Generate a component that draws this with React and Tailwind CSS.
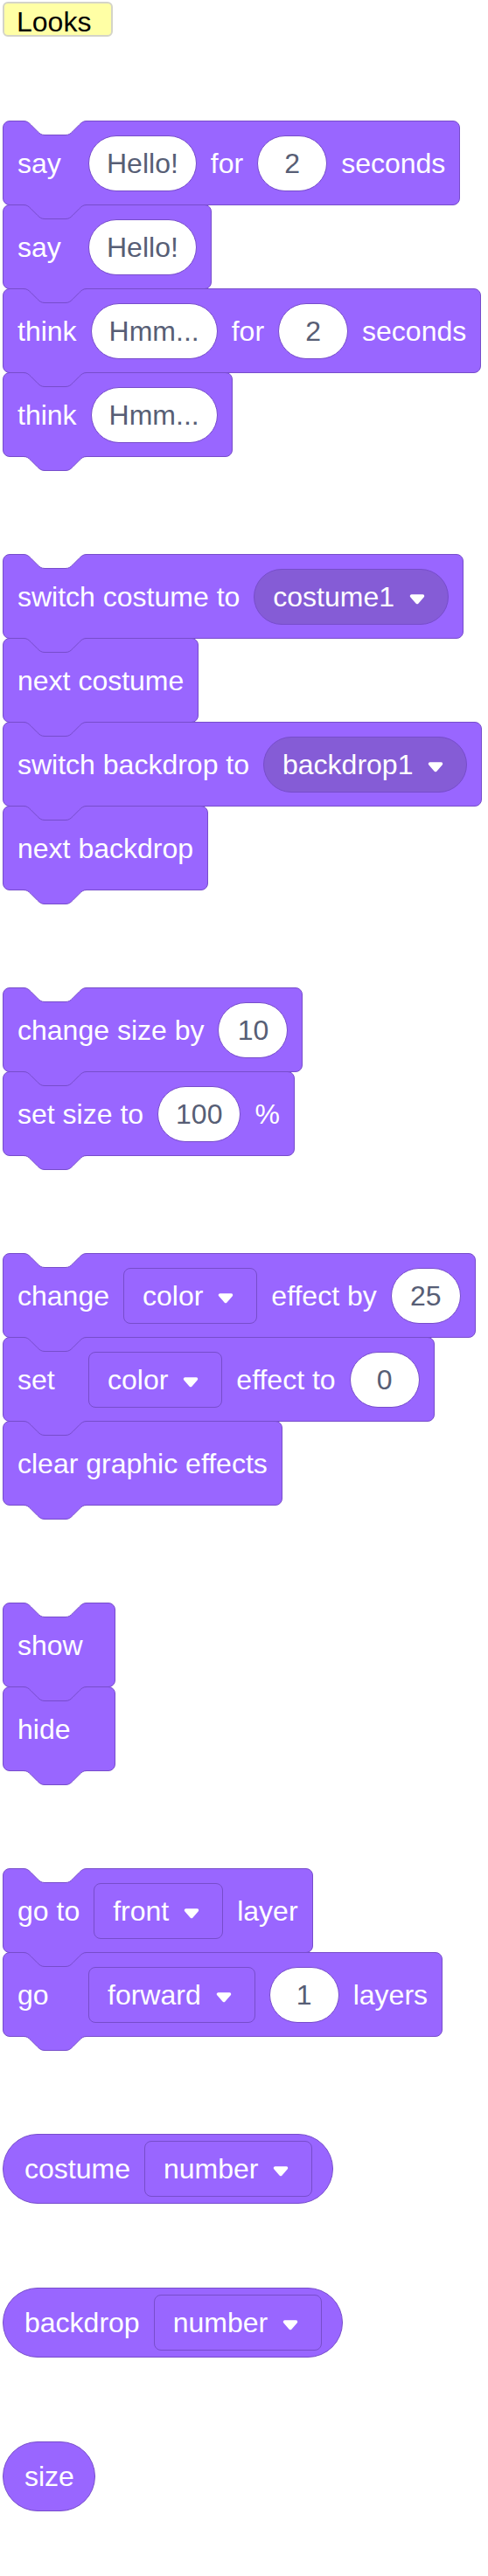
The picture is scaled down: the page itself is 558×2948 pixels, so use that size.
import React from 'react';

const NOTCH = 'M24,0.5 c4,0 6,2 8,4 l8,8 c2,2 4,4 8,4 h24 c4,0 6,-2 8,-4 l8,-8 c2,-2 4,-4 8,-4';

// notch cut at the top of a block, or the tab under the last block of a stack
function Notch({ fill, className }) {
  return (
    <svg
      className={`pointer-events-none absolute -left-px h-[20px] w-[100px] overflow-visible ${className}`}
      viewBox="0 0 100 20"
    >
      <path d={`${NOTCH} V-1.5 H24 Z`} fill={fill} />
      <path d={NOTCH} fill="none" stroke="#774DCB" strokeWidth="1" />
    </svg>
  );
}

function Arrow() {
  return (
    <svg viewBox="0 0 20 14" className="mt-[6px] h-[14px] w-[20px] shrink-0">
      <path
        d="M3.5,3 H16.5 L10,10.5 Z"
        fill="#ffffff"
        stroke="#ffffff"
        strokeWidth="3.5"
        strokeLinejoin="round"
      />
    </svg>
  );
}

function Text({ children, first }) {
  return (
    <span className={`whitespace-nowrap text-[32px] text-white ${first ? 'min-w-[65px]' : ''}`}>
      {children}
    </span>
  );
}

function Input({ children }) {
  return (
    <span className="flex h-16 min-w-[80px] items-center justify-center whitespace-nowrap rounded-full border border-[#774DCB] bg-white px-5 text-[32px] text-[#575E75]">
      {children}
    </span>
  );
}

function RoundMenu({ children }) {
  return (
    <span className="flex h-16 items-center gap-[16px] whitespace-nowrap rounded-full border border-[#774DCB] bg-[#855CD6] pl-[21px] pr-[25px] text-[32px] text-white">
      {children}
      <Arrow />
    </span>
  );
}

function Menu({ children }) {
  return (
    <span className="flex h-16 items-center gap-[16px] whitespace-nowrap rounded-lg border border-[#774DCB] bg-[#9966FF] pl-[21px] pr-[25px] text-[32px] text-white">
      {children}
      <Arrow />
    </span>
  );
}

function Block({ first, last, narrow, children }) {
  return (
    <div
      className={`relative flex h-[97px] items-center gap-4 rounded-lg border border-[#774DCB] bg-[#9966FF] px-4 ${
        first ? '' : '-mt-px'
      } ${narrow ? 'min-w-[129px]' : ''}`}
    >
      <Notch fill={first ? '#ffffff' : '#9966FF'} className="-top-px" />
      {children}
      {last && <Notch fill="#9966FF" className="top-full" />}
    </div>
  );
}

function Stack({ children }) {
  return <div className="flex flex-col items-start pb-[15px]">{children}</div>;
}

function Reporter({ children }) {
  return (
    <div className="flex h-20 items-center gap-4 rounded-full border border-[#774DCB] bg-[#9966FF] pl-6 pr-[23px]">
      {children}
    </div>
  );
}

export default function App() {
  return (
    <div className="flex min-h-[2948px] flex-col items-start gap-[96px] bg-white pl-[3px] pt-[2px] font-['Liberation_Sans',Arial,sans-serif]">
      {/* category label */}
      <div className="h-[40px] w-[126px] rounded-[6px] border-2 border-[#d4d4c8] bg-[#ffffa5] pl-[14px] pt-[3px] text-[32px] leading-[36px] text-black">
        Looks
      </div>

      <Stack>
        <Block first>
          <Text first>say</Text>
          <Input>Hello!</Input>
          <Text>for</Text>
          <Input>2</Input>
          <Text>seconds</Text>
        </Block>
        <Block>
          <Text first>say</Text>
          <Input>Hello!</Input>
        </Block>
        <Block>
          <Text first>think</Text>
          <Input>Hmm...</Input>
          <Text>for</Text>
          <Input>2</Input>
          <Text>seconds</Text>
        </Block>
        <Block last>
          <Text first>think</Text>
          <Input>Hmm...</Input>
        </Block>
      </Stack>

      <Stack>
        <Block first>
          <Text>switch costume to</Text>
          <RoundMenu>costume1</RoundMenu>
        </Block>
        <Block>
          <Text>next costume</Text>
        </Block>
        <Block>
          <Text>switch backdrop to</Text>
          <RoundMenu>backdrop1</RoundMenu>
        </Block>
        <Block last>
          <Text>next backdrop</Text>
        </Block>
      </Stack>

      <Stack>
        <Block first>
          <Text>change size by</Text>
          <Input>10</Input>
        </Block>
        <Block last>
          <Text>set size to</Text>
          <Input>100</Input>
          <Text>%</Text>
        </Block>
      </Stack>

      <Stack>
        <Block first>
          <Text first>change</Text>
          <Menu>color</Menu>
          <Text>effect by</Text>
          <Input>25</Input>
        </Block>
        <Block>
          <Text first>set</Text>
          <Menu>color</Menu>
          <Text>effect to</Text>
          <Input>0</Input>
        </Block>
        <Block last>
          <Text>clear graphic effects</Text>
        </Block>
      </Stack>

      <Stack>
        <Block first narrow>
          <Text>show</Text>
        </Block>
        <Block last narrow>
          <Text>hide</Text>
        </Block>
      </Stack>

      <Stack>
        <Block first>
          <Text first>go to</Text>
          <Menu>front</Menu>
          <Text>layer</Text>
        </Block>
        <Block last>
          <Text first>go</Text>
          <Menu>forward</Menu>
          <Input>1</Input>
          <Text>layers</Text>
        </Block>
      </Stack>

      <Reporter>
        <Text>costume</Text>
        <Menu>number</Menu>
      </Reporter>

      <Reporter>
        <Text>backdrop</Text>
        <Menu>number</Menu>
      </Reporter>

      <Reporter>
        <Text>size</Text>
      </Reporter>
    </div>
  );
}
